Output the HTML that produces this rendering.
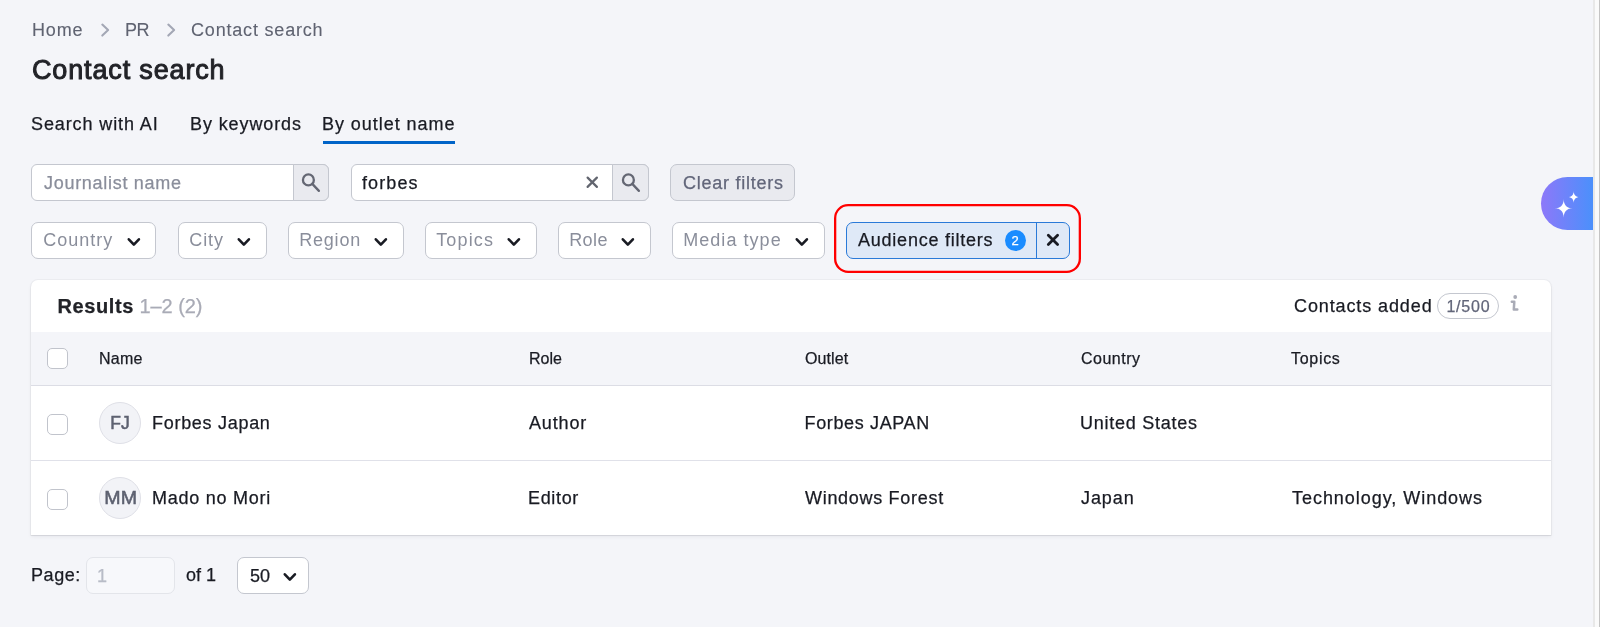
<!DOCTYPE html>
<html><head><meta charset="utf-8">
<style>
*{box-sizing:border-box;margin:0;padding:0}
html,body{will-change:transform;width:1600px;height:627px;overflow:hidden;background:#f4f5f9;font-family:"Liberation Sans",sans-serif;color:#191b23}
.a{position:absolute;white-space:nowrap;-webkit-text-stroke:0.25px currentColor}
svg{position:absolute;overflow:visible}
.bc{font-size:18px;color:#5f6371;line-height:20px;-webkit-text-stroke:0.1px currentColor}
.title{font-size:27px;font-weight:bold;color:#222328;line-height:30px}
.tab{font-size:18px;color:#191b23;line-height:20px}
.inp{position:absolute;background:#fff;border:1px solid #c4c7cf;border-radius:6px;height:37px;top:164px}
.sbtn{position:absolute;top:-1px;right:-1px;height:37px;background:#e9eaef;border:1px solid #c4c7cf;border-radius:0 6px 6px 0}
.ph{font-size:18px;color:#8a8e9b;line-height:20px}
.sel{position:absolute;background:#fff;border:1px solid #c4c7cf;border-radius:7px;height:37px;top:222px}
.seltxt{position:absolute;top:7px;font-size:18px;color:#8a8e9b;line-height:20px;white-space:nowrap}
.card{position:absolute;left:31px;top:280px;width:1520px;height:255px;background:#fff;border-radius:7px 7px 0 0;box-shadow:0 0 0 1px rgba(25,27,35,0.035),0 1px 1px rgba(25,27,35,0.08),0 2px 4px rgba(25,27,35,0.05)}
.th{font-size:16px;color:#191b23;line-height:18px}
.td{font-size:18px;color:#191b23;line-height:20px}
.cb{position:absolute;width:21px;height:21px;border:1px solid #c1c4cc;border-radius:5px;background:#fff}
.av{position:absolute;width:42px;height:42px;border-radius:50%;background:#f2f3f7;border:1px solid #dfe0e7;color:#5d6170;font-weight:normal;-webkit-text-stroke:0.5px #5d6170;font-size:17.5px;text-align:center;line-height:41px}
</style></head>
<body>
<!-- breadcrumb -->
<div class="a bc" style="left:32px;top:20px;letter-spacing:0.83px">Home</div>
<svg style="left:100px;top:22px" width="11" height="16" viewBox="0 0 11 16"><path d="M2.3 2.6 L8.1 8.1 L2.3 13.6" fill="none" stroke="#a3a7b5" stroke-width="2.1" stroke-linecap="round" stroke-linejoin="round"/></svg>
<div class="a bc" style="left:125px;top:20px;letter-spacing:-0.5px">PR</div>
<svg style="left:165.5px;top:22px" width="11" height="16" viewBox="0 0 11 16"><path d="M2.3 2.6 L8.1 8.1 L2.3 13.6" fill="none" stroke="#a3a7b5" stroke-width="2.1" stroke-linecap="round" stroke-linejoin="round"/></svg>
<div class="a bc" style="left:191px;top:20px;letter-spacing:0.81px">Contact search</div>

<div class="a title" style="left:32px;top:55px;letter-spacing:0.85px;font-weight:normal;-webkit-text-stroke:0.95px #222328">Contact search</div>

<!-- tabs -->
<div class="a tab" style="left:31px;top:114px;letter-spacing:0.89px">Search with AI</div>
<div class="a tab" style="left:190px;top:114px;letter-spacing:0.9px">By keywords</div>
<div class="a tab" style="left:322px;top:114px;letter-spacing:0.95px">By outlet name</div>
<div class="a" style="left:323px;top:141px;width:132px;height:3px;background:#0064c8"></div>

<!-- search inputs -->
<div class="inp" style="left:31px;width:298px">
  <div class="a ph" style="left:12px;top:8px;letter-spacing:0.71px">Journalist name</div>
  <div class="sbtn" style="width:36px"><svg style="left:7px;top:7.5px" width="20" height="20" viewBox="0 0 20 20"><circle cx="7.4" cy="6.9" r="5.45" fill="none" stroke="#646773" stroke-width="2.3"/><path d="M11.3 10.9 L17.9 17.9" stroke="#646773" stroke-width="2.3" stroke-linecap="round"/></svg></div>
</div>
<div class="inp" style="left:351px;width:298px">
  <div class="a ph" style="left:10px;top:8px;color:#191b23;letter-spacing:1.1px">forbes</div>
  <svg style="left:234px;top:11px" width="14" height="14" viewBox="0 0 14 14"><path d="M1.6 1.6 L10.9 10.9 M10.9 1.6 L1.6 10.9" stroke="#62656f" stroke-width="2.2" stroke-linecap="round"/></svg>
  <div class="sbtn" style="width:37px"><svg style="left:7.5px;top:7.5px" width="20" height="20" viewBox="0 0 20 20"><circle cx="7.4" cy="6.9" r="5.45" fill="none" stroke="#646773" stroke-width="2.3"/><path d="M11.3 10.9 L17.9 17.9" stroke="#646773" stroke-width="2.3" stroke-linecap="round"/></svg></div>
</div>
<div class="a" style="left:670px;top:164px;width:125px;height:37px;background:#e9eaef;border:1px solid #c4c7cf;border-radius:7px">
  <div class="a ph" style="left:12px;top:8px;color:#62667a;letter-spacing:0.75px">Clear filters</div>
</div>

<!-- filters -->
<div class="sel" style="left:31px;width:125px"><div class="seltxt" style="left:11.2px;letter-spacing:1px">Country</div><svg style="left:94.1px;top:12.6px" width="16" height="12" viewBox="0 0 16 12"><path d="M2.8 3.3 L7.85 8.65 L12.9 3.3" fill="none" stroke="#191b23" stroke-width="2.6" stroke-linecap="round" stroke-linejoin="round"/></svg></div>
<div class="sel" style="left:178px;width:89px"><div class="seltxt" style="left:10.3px;letter-spacing:0.9px">City</div><svg style="left:57.2px;top:12.6px" width="16" height="12" viewBox="0 0 16 12"><path d="M2.8 3.3 L7.85 8.65 L12.9 3.3" fill="none" stroke="#191b23" stroke-width="2.6" stroke-linecap="round" stroke-linejoin="round"/></svg></div>
<div class="sel" style="left:288px;width:116px"><div class="seltxt" style="left:10.2px;letter-spacing:0.8px">Region</div><svg style="left:83.9px;top:12.6px" width="16" height="12" viewBox="0 0 16 12"><path d="M2.8 3.3 L7.85 8.65 L12.9 3.3" fill="none" stroke="#191b23" stroke-width="2.6" stroke-linecap="round" stroke-linejoin="round"/></svg></div>
<div class="sel" style="left:425px;width:112px"><div class="seltxt" style="left:10.2px;letter-spacing:1.15px">Topics</div><svg style="left:80.3px;top:12.6px" width="16" height="12" viewBox="0 0 16 12"><path d="M2.8 3.3 L7.85 8.65 L12.9 3.3" fill="none" stroke="#191b23" stroke-width="2.6" stroke-linecap="round" stroke-linejoin="round"/></svg></div>
<div class="sel" style="left:558px;width:93px"><div class="seltxt" style="left:10.2px;letter-spacing:0.4px">Role</div><svg style="left:61.2px;top:12.6px" width="16" height="12" viewBox="0 0 16 12"><path d="M2.8 3.3 L7.85 8.65 L12.9 3.3" fill="none" stroke="#191b23" stroke-width="2.6" stroke-linecap="round" stroke-linejoin="round"/></svg></div>
<div class="sel" style="left:672px;width:153px"><div class="seltxt" style="left:10.2px;letter-spacing:1.05px">Media type</div><svg style="left:121.3px;top:12.6px" width="16" height="12" viewBox="0 0 16 12"><path d="M2.8 3.3 L7.85 8.65 L12.9 3.3" fill="none" stroke="#191b23" stroke-width="2.6" stroke-linecap="round" stroke-linejoin="round"/></svg></div>

<!-- audience filters -->
<svg style="left:834px;top:204px" width="247" height="69" viewBox="0 0 247 69"><rect x="1.15" y="1.15" width="244.7" height="66.7" rx="13" ry="13" fill="none" stroke="#ff0000" stroke-width="2.3"/></svg>
<div class="a" style="left:846px;top:222px;width:224px;height:37px;background:#dfe9f7;border:1px solid #2a7ad8;border-radius:7px">
  <div class="a" style="left:11px;top:7px;font-size:18px;line-height:20px;color:#191b23;letter-spacing:0.77px">Audience filters</div>
  <div class="a" style="left:157.5px;top:6.5px;width:21px;height:21px;border-radius:50%;background:#1a8cff;color:#fff;font-size:13px;line-height:21px;text-align:center">2</div>
  <div class="a" style="left:189px;top:-1px;width:1px;height:37px;background:#2a7ad8"></div>
  <svg style="left:198.5px;top:10px" width="14" height="14" viewBox="0 0 14 14"><path d="M2.3 2.3 L11.6 11.6 M11.6 2.3 L2.3 11.6" stroke="#191b23" stroke-width="2.8" stroke-linecap="round"/></svg>
</div>

<!-- AI button -->
<div class="a" style="left:1541px;top:177px;width:52px;height:53px;border-radius:27px 0 0 27px;background:linear-gradient(90deg,#8d78f9,#4b90fb)">
  <svg style="left:0;top:0" width="52" height="53" viewBox="0 0 52 53">
    <path d="M22.70 21.90 C22.70 27.92 25.94 31.30 31.70 31.30 C25.94 31.30 22.70 34.68 22.70 40.70 C22.70 34.68 19.46 31.30 13.70 31.30 C19.46 31.30 22.70 27.92 22.70 21.90Z" fill="#fff"/>
    <path d="M32.70 13.90 C32.70 17.80 34.90 20.00 38.80 20.00 C34.90 20.00 32.70 22.20 32.70 26.10 C32.70 22.20 30.50 20.00 26.60 20.00 C30.50 20.00 32.70 17.80 32.70 13.90Z" fill="#fff"/>
  </svg>
</div>

<!-- scrollbar -->
<div class="a" style="left:1593px;top:0;width:7px;height:627px;background:#fafafa;border-left:2px solid #e8e8e8;border-right:1px solid #c4c4c4"></div>

<!-- card -->
<div class="card">
  <div class="a" style="left:26.5px;top:15px;font-size:20px;line-height:22px;font-weight:bold;color:#222328;letter-spacing:0.6px">Results</div>
  <div class="a" style="left:108.5px;top:15px;font-size:20px;line-height:22px;color:#a9abb6;letter-spacing:-0.07px">1–2 (2)</div>
  <div class="a" style="left:1263px;top:16px;font-size:18px;line-height:20px;color:#191b23;letter-spacing:0.89px">Contacts added</div>
  <div class="a" style="left:1406px;top:13px;width:62px;height:26px;border:1px solid #c4c7cf;border-radius:13px;font-size:16px;line-height:25px;color:#62667a;text-align:center;letter-spacing:0.8px;text-indent:0.8px">1/500</div>
  <svg style="left:1474px;top:10px" width="20" height="25" viewBox="0 0 20 25"><circle cx="10.2" cy="7" r="1.9" fill="#a9abb6"/><path d="M6.8 11.7 L9.3 11.7 L8.8 19.5 L12.3 19.5" fill="none" stroke="#a9abb6" stroke-width="2.5" stroke-linecap="round" stroke-linejoin="round"/></svg>
  <div class="a" style="left:0;top:52px;width:1520px;height:54px;background:#f4f5f9;border-bottom:1px solid #dcdde5"></div>
  <div class="cb" style="left:16px;top:68px"></div>
  <div class="a th" style="left:68px;top:70px;letter-spacing:0.23px">Name</div>
  <div class="a th" style="left:498px;top:70px">Role</div>
  <div class="a th" style="left:774px;top:70px;letter-spacing:0.1px">Outlet</div>
  <div class="a th" style="left:1050px;top:70px;letter-spacing:0.5px">Country</div>
  <div class="a th" style="left:1260px;top:70px;letter-spacing:0.7px">Topics</div>
  <!-- row 1 -->
  <div class="cb" style="left:16px;top:134px"></div>
  <div class="av" style="left:68px;top:122px">FJ</div>
  <div class="a td" style="left:121px;top:133px;letter-spacing:0.71px">Forbes Japan</div>
  <div class="a td" style="left:498px;top:133px;letter-spacing:0.84px">Author</div>
  <div class="a td" style="left:773.5px;top:133px;letter-spacing:0.64px">Forbes JAPAN</div>
  <div class="a td" style="left:1049px;top:133px;letter-spacing:0.75px">United States</div>
  <div class="a" style="left:0;top:180px;width:1520px;height:1px;background:#e0e1e9"></div>
  <!-- row 2 -->
  <div class="cb" style="left:16px;top:209px"></div>
  <div class="av" style="left:68px;top:197px"><span style="display:inline-block;transform:scaleX(1.12);letter-spacing:0.2px;position:relative;left:1px">MM</span></div>
  <div class="a td" style="left:121px;top:208px;letter-spacing:0.75px">Mado no Mori</div>
  <div class="a td" style="left:497px;top:208px;letter-spacing:0.66px">Editor</div>
  <div class="a td" style="left:774px;top:208px;letter-spacing:0.7px">Windows Forest</div>
  <div class="a td" style="left:1050px;top:208px;letter-spacing:0.92px">Japan</div>
  <div class="a td" style="left:1261px;top:208px;letter-spacing:0.96px">Technology, Windows</div>
</div>

<!-- pagination -->
<div class="a td" style="left:31px;top:565px;letter-spacing:0.57px">Page:</div>
<div class="a" style="left:86px;top:557px;width:89px;height:37px;background:#f7f8fb;border:1px solid #e3e5ea;border-radius:7px"><div class="a td" style="left:10px;top:8px;color:#b8bcc7">1</div></div>
<div class="a td" style="left:186px;top:565px">of 1</div>
<div class="a" style="left:237px;top:557px;width:72px;height:37px;background:#fff;border:1px solid #c4c7cf;border-radius:7px">
  <div class="a td" style="left:12px;top:8px">50</div>
  <svg style="left:44px;top:12.5px" width="16" height="12" viewBox="0 0 16 12"><path d="M2.8 3.3 L7.85 8.65 L12.9 3.3" fill="none" stroke="#191b23" stroke-width="2.6" stroke-linecap="round" stroke-linejoin="round"/></svg>
</div>
</body></html>
